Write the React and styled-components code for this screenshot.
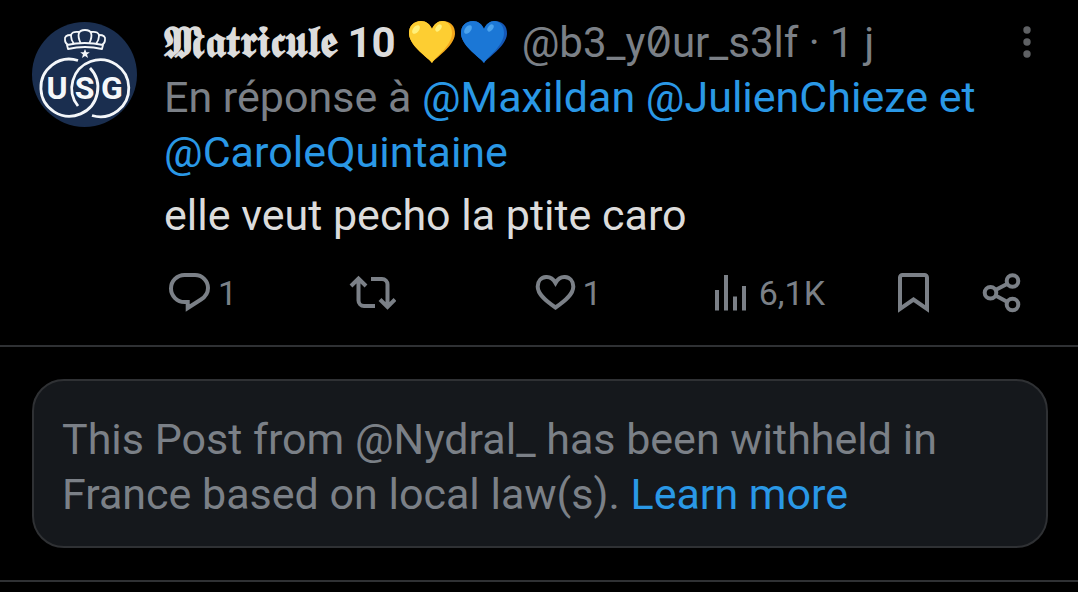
import React from 'react'
import styled, { createGlobalStyle } from 'styled-components'

const replyTo = ['Maxildan', 'JulienChieze', 'CaroleQuintaine']

const ReplyIcon = () => (
	<StyledIcon viewBox="0 0 48 48">
		<path d="M18.500 6H29a13 13 0 0 1 13 13c0 5-3 9-7 11.500L21.700 39V33h-3.200a13.500 13.500 0 0 1 0-27z" />
	</StyledIcon>
)

const RepostIcon = () => (
	<StyledIcon viewBox="0 0 48 48">
		<path d="M3 17l7.500-7.500L18 17M10.500 10v21.500a5.500 5.500 0 0 0 5.500 5.500h11M23 10h11a5.500 5.500 0 0 1 5.500 5.500V37M32 30.500l7.500 7.500 7.500-7.500" />
	</StyledIcon>
)

const LikeIcon = () => (
	<StyledIcon viewBox="0 0 48 48">
		<path d="M24.500 14C22 9.500 18.500 7.800 15 8.100 10 8.500 6.700 12.500 6.700 17.500c0 7.500 7.500 14 17.800 21 10.300-7 17.800-13.500 17.800-21 0-5-3.300-9-8.300-9.400-3.500-.3-7 1.400-9.500 5.900z" />
	</StyledIcon>
)

const ViewsIcon = () => (
	<StyledIcon viewBox="0 0 42 48" $width={42}>
		<path d="M4 21v20.500M13 6v35.500M22 27.500v14M31 17v24.500" />
	</StyledIcon>
)

const BookmarkIcon = () => (
	<StyledIcon viewBox="0 0 48 48">
		<path d="M5 40V8.500a2.500 2.500 0 0 1 2.500-2.500h22a2.500 2.500 0 0 1 2.500 2.500V40l-13.500-9.500z" />
	</StyledIcon>
)

const ShareIcon = () => (
	<StyledIcon viewBox="0 0 48 48">
		<circle cx="9.500" cy="23.800" r="5.800" />
		<circle cx="31.500" cy="12" r="5.800" />
		<circle cx="31.500" cy="35.500" r="5.800" />
		<path d="M14.500 21l12-6.300M14.500 26.600l12 6.300" />
	</StyledIcon>
)

const HeartEmoji = ({ label, base, shade, shine }) => (
	<StyledEmoji viewBox="0 0 48 44" role="img" aria-label={label}>
		<path
			fill={shade}
			d="M24 43C21 38 2 27 1 14 .5 6 6 1 13 1c5 0 9 3 11 8 2-5 6-8 11-8 7 0 12.500 5 12 13-1 13-20 24-23 29z"
		/>
		<path
			fill={base}
			d="M24 43C21 38 2 27 1 14 .5 6 6 1 13 1c5 0 9 3 11 8 2-5 6-8 10-8 6 0 10 5 10 12 0 13-17 24-20 30z"
		/>
		<ellipse cx="8" cy="9.500" rx="3" ry="5" fill={shine} transform="rotate(38 8 9.500)" />
		<ellipse cx="30.500" cy="8" rx="2.500" ry="4" fill={shine} transform="rotate(38 30.500 8)" />
	</StyledEmoji>
)

const Avatar = () => (
	<StyledAvatar viewBox="0 0 105 105" role="img" aria-label="USG">
		<circle cx="52.500" cy="52.500" r="52.500" fill="#1a2e4f" />
		<g fill="none" stroke="#f4f7fa" strokeWidth="1.800" strokeLinejoin="round">
			<path d="M35 23q17.500-4 36 0l-1 4q-17-4-34 0z" />
			<path d="M48.500 21C45 13 46 8 53 8s8 5 4.500 13" />
			<path d="M47 10q-8-1-8 4 0 4 3 8M59 10q8-1 8 4 0 4-3 8" />
			<path d="M39 13q-7 0-6 5 0 3 3 5M67 13q7 0 6 5 0 3-3 5" />
		</g>
		<path fill="#f4f7fa" d="M53 27l1.300 3.300h3.500l-2.800 2.300 1.100 3.500-3.100-2-3.100 2 1.100-3.500-2.800-2.300h3.500z" />
		<g fill="none" stroke="#f4f7fa" strokeWidth="2.800">
			<path d="M46 38.500A28.500 28.500 0 1 0 58 46" />
			<path d="M46 84A28.500 28.500 0 1 1 60 93.500" />
		</g>
		<g
			fill="#f4f7fa"
			fontFamily="Roboto, sans-serif"
			fontWeight="700"
			fontSize="32"
			textAnchor="middle">
			<text x="25" y="77">U</text>
			<text x="52.500" y="77">S</text>
			<text x="80" y="77">G</text>
		</g>
	</StyledAvatar>
)

const Action = ({ icon, count, label }) => (
	<StyledAction type="button" aria-label={label}>
		{icon}
		{count && <span>{count}</span>}
	</StyledAction>
)

const Mention = ({ name }) => <StyledLink href={`#${name}`}>@{name}</StyledLink>

const Post = () => (
	<StyledPost>
		<Avatar />
		<StyledContent>
			<StyledHeader>
				<StyledName>
					<StyledFraktur>𝕸𝖆𝖙𝖗𝖎𝖈𝖚𝖑𝖊</StyledFraktur> 10
				</StyledName>
				<StyledEmojis>
					<HeartEmoji label="yellow heart" base="#fdce32" shade="#f2a61b" shine="#fff07a" />
					<HeartEmoji label="blue heart" base="#1b77d6" shade="#1557b5" shine="#4ba3ee" />
				</StyledEmojis>
				<StyledHandle>
					@b3_y<StyledZero>0</StyledZero>ur_s3lf · 1 j
				</StyledHandle>
				<StyledMore type="button" aria-label="More">
					<svg width="8" height="34" viewBox="0 0 8 34" fill="currentColor">
						<circle cx="4" cy="5" r="3.700" />
						<circle cx="4" cy="17" r="3.700" />
						<circle cx="4" cy="29" r="3.700" />
					</svg>
				</StyledMore>
			</StyledHeader>
			<StyledReplyTo>
				En réponse à <Mention name={replyTo[0]} /> <Mention name={replyTo[1]} />{' '}
				<StyledLink as="span">et</StyledLink> <Mention name={replyTo[2]} />
			</StyledReplyTo>
			<StyledBody>elle veut pecho la ptite caro</StyledBody>
			<StyledActions>
				<Action icon={<ReplyIcon />} count="1" label="Reply" />
				<Action icon={<RepostIcon />} label="Repost" />
				<Action icon={<LikeIcon />} count="1" label="Like" />
				<Action icon={<ViewsIcon />} count="6,1K" label="Views" />
				<StyledActionGroup>
					<Action icon={<BookmarkIcon />} label="Bookmark" />
					<Action icon={<ShareIcon />} label="Share" />
				</StyledActionGroup>
			</StyledActions>
		</StyledContent>
	</StyledPost>
)

const App = () => (
	<main>
		<GlobalStyle />
		<Post />
		<StyledNoticeRow>
			<StyledNotice>
				This Post from @Nydral_ has been withheld in France based on local law(s).{' '}
				<StyledLink href="#learn-more">Learn more</StyledLink>
			</StyledNotice>
		</StyledNoticeRow>
	</main>
)

export default App

const GlobalStyle = createGlobalStyle`
	body {
		margin: 0;
		background: #000;
		color: #7b8087;
		font-family: Roboto, sans-serif;
		font-size: 43px;
		line-height: 55px;
	}
	button {
		padding: 0;
		border: 0;
		background: none;
		color: inherit;
		font: inherit;
		cursor: pointer;
	}
`
const StyledPost = styled.article`
	display: flex;
	gap: 27px;
	padding: 14px 32px 28px;
	border-bottom: 2px solid #2f3134;
`
const StyledAvatar = styled.svg`
	flex: none;
	width: 105px;
	height: 105px;
	margin-top: 8px;
`
const StyledContent = styled.div`
	flex: 1;
	min-width: 0;
`
const StyledHeader = styled.header`
	display: flex;
	align-items: center;
	height: 56px;
	white-space: nowrap;
`
const StyledName = styled.span`
	color: #dcdcdc;
	font-weight: 700;
	font-size: 42px;
`
const StyledFraktur = styled.span`
	font-family: 'DejaVu Sans', sans-serif;
	font-size: 44px;
`
const StyledEmojis = styled.span`
	display: flex;
	gap: 4px;
	margin: 0 14px 0 12px;
`
const StyledEmoji = styled.svg`
	width: 48px;
	height: 44px;
`
const StyledHandle = styled.span`
	flex: 1;
	font-size: 42px;
`
const StyledZero = styled.span`
	font-family: Inter, Roboto, sans-serif;
	font-feature-settings: 'zero';
`
const StyledMore = styled.button`
	display: flex;
	padding: 0 15px;
	color: #5f6164;
`
const StyledReplyTo = styled.p`
	margin: 0;
`
const StyledLink = styled.a`
	color: #2a98e6;
	text-decoration: none;
`
const StyledBody = styled.p`
	margin: 8px 0 0;
	color: #dcdcdc;
`
const StyledActions = styled.div`
	display: grid;
	grid-template-columns: repeat(4, 1fr) 134px;
	margin: 26px 17px 0 2px;
`
const StyledAction = styled.button`
	display: flex;
	align-items: center;
	gap: 4px;

	&& {
		font-size: 34px;
		line-height: 48px;
	}
`
const StyledActionGroup = styled.div`
	display: flex;
	justify-content: space-between;
`
const StyledIcon = styled.svg`
	width: ${props => props.$width || 48}px;
	height: 48px;
	fill: none;
	stroke: currentColor;
	stroke-width: 4px;
`
const StyledNoticeRow = styled.section`
	padding: 32px 30px 32px 32px;
	border-bottom: 2px solid #2f3134;
`
const StyledNotice = styled.p`
	margin: 0;
	padding: 31px 28px 24px;
	border: 2px solid #2f3134;
	border-radius: 32px;
	background: #15181c;
`
